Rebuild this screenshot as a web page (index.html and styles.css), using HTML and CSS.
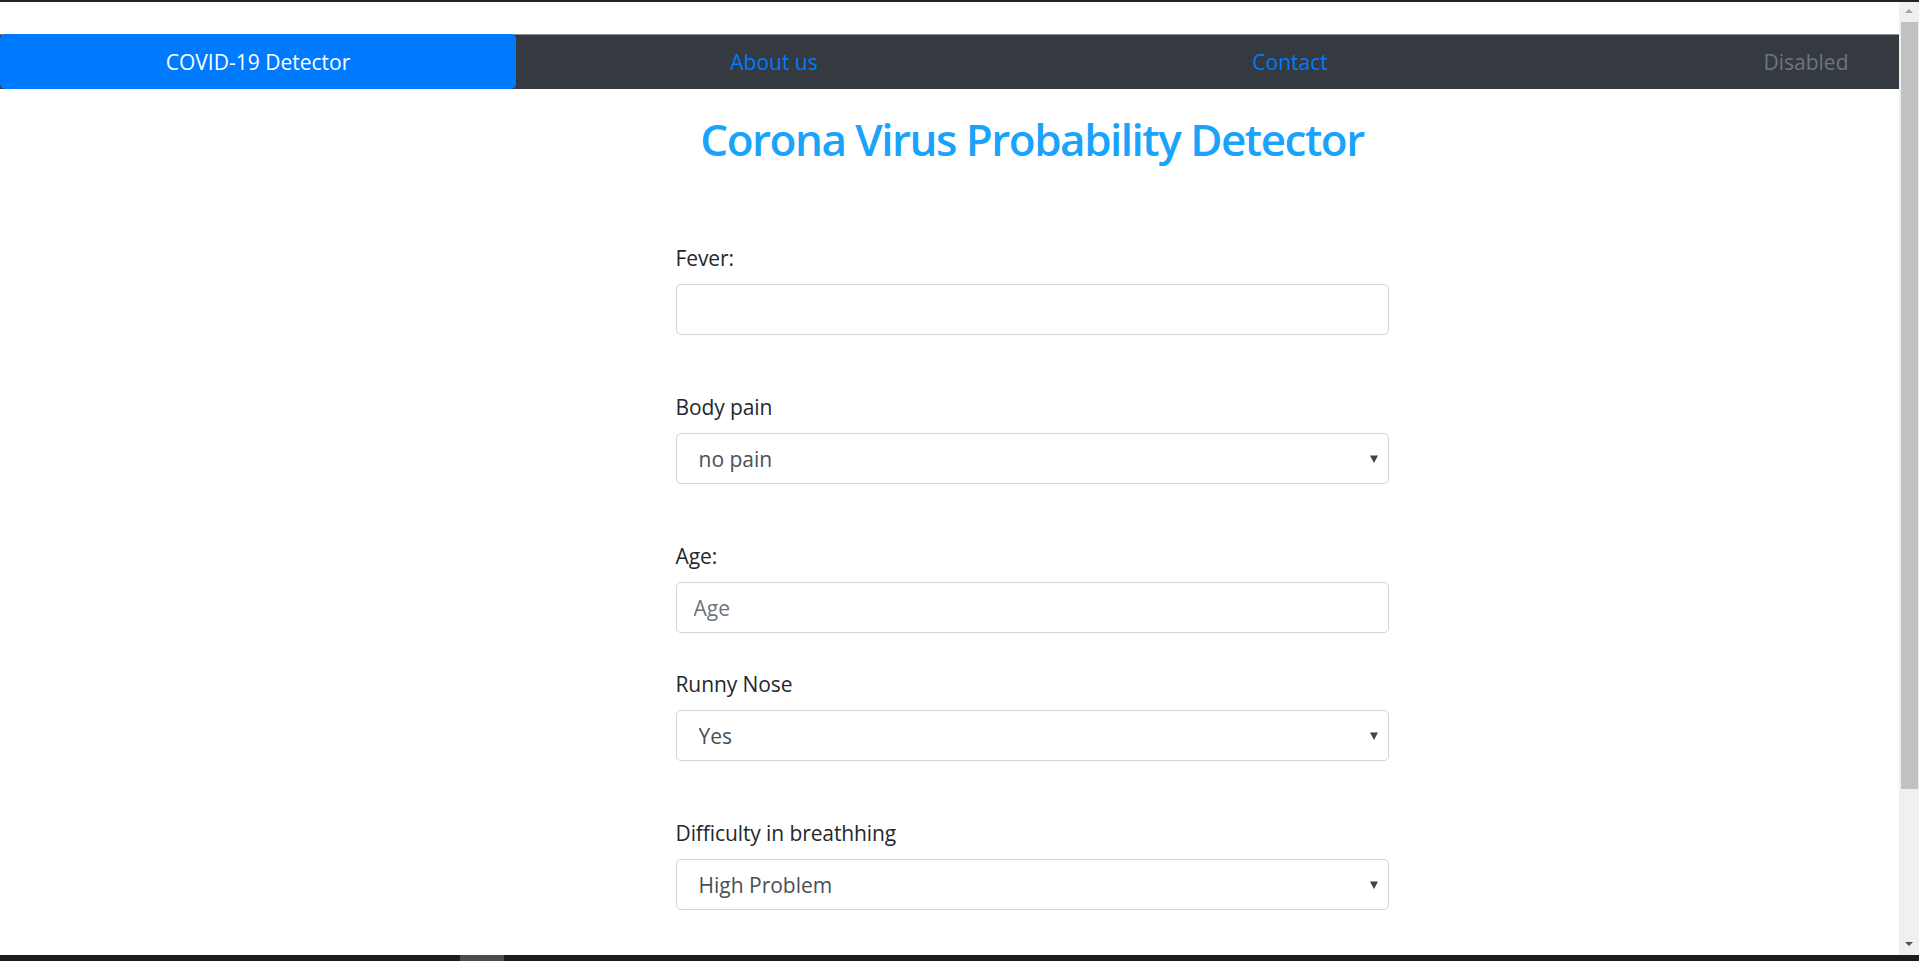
FILE: index.html
```html
<!DOCTYPE html>
<html lang="en">
<head>
<meta charset="utf-8">
<title>COVID-19 Detector</title>
<link rel="stylesheet" href="styles.css">
</head>
<body>
<div class="topline"></div>
<div class="window">
  <div class="viewport">
    <div class="page">
      <nav class="nav">
        <a class="nav-link active" href="#">COVID-19 Detector</a>
        <a class="nav-link" href="#">About us</a>
        <a class="nav-link" href="#">Contact</a>
        <a class="nav-link disabled" href="#">Disabled</a>
      </nav>
      <h1 class="title">Corona Virus Probability Detector</h1>
      <form class="form">
        <div class="group">
          <label class="label" for="fever">Fever:</label>
          <input class="control" id="fever" type="text">
        </div>
        <div class="group">
          <label class="label" for="pain">Body pain</label>
          <select class="control select" id="pain"><option>no pain</option><option>mild pain</option><option>severe pain</option></select>
        </div>
        <div class="group tight">
          <label class="label" for="age">Age:</label>
          <input class="control" id="age" type="text" placeholder="Age">
        </div>
        <div class="group">
          <label class="label" for="nose">Runny Nose</label>
          <select class="control select" id="nose"><option>Yes</option><option>No</option></select>
        </div>
        <div class="group">
          <label class="label" for="breath">Difficulty in breathhing</label>
          <select class="control select" id="breath"><option>High Problem</option><option>Low Problem</option><option>No Problem</option></select>
        </div>
      </form>
    </div>
  </div>
  <div class="vscroll">
    <span class="arrow up"></span>
    <span class="thumb"></span>
    <span class="vspace"></span>
    <span class="arrow down"></span>
  </div>
</div>
<div class="hscroll"><span class="hthumb"></span></div>
</body>
</html>
```

FILE: styles.css
```css
html, body {
  margin: 0;
  padding: 0;
}
body {
  width: 1919px;
  height: 961px;
  overflow: hidden;
  background: #ffffff;
  font-family: "Open Sans", "Noto Sans", "Liberation Sans", sans-serif;
  color: #212529;
}
.topline {
  height: 2px;
  background: #232323;
}
.window {
  display: flex;
  height: 953px;
}
.viewport {
  width: 1899px;
  flex-shrink: 0;
  overflow: hidden;
  background: #ffffff;
}
.page {
  width: 2064px;
  padding-top: 32px;
}
.nav {
  display: flex;
  height: 54px;
  background: #343a40;
  border-top: 1px solid #8b8f94;
}
.nav-link {
  flex: 0 0 516px;
  display: flex;
  align-items: center;
  justify-content: center;
  font-size: 21px;
  color: #007bff;
  text-decoration: none;
  border-radius: 5px;
}
.nav-link.active {
  background: #007bff;
  color: #ffffff;
  margin-top: -1px;
}
.nav-link.disabled {
  color: #6c757d;
}
.title {
  margin: 20px 0 0;
  height: 60px;
  line-height: 60px;
  text-align: center;
  font-size: 44px;
  font-weight: 600;
  color: #1aa3fa;
  letter-spacing: -1.5px;
}
.form {
  width: 713px;
  margin: 73px auto 0;
}
.group {
  display: flex;
  flex-direction: column;
  margin-bottom: 56px;
}
.group.tight {
  margin-bottom: 35px;
}
.label {
  line-height: 32px;
  font-size: 21px;
  margin-bottom: 10px;
  color: #24282c;
  letter-spacing: -0.1px;
}
.control {
  box-sizing: border-box;
  height: 51px;
  width: 100%;
  border: 1px solid #ced4da;
  border-radius: 5px;
  padding: 0 17px;
  font-family: inherit;
  font-size: 21px;
  color: #495057;
  background: #ffffff;
  outline: none;
}
.control::placeholder {
  color: #6c757d;
}
.select {
  appearance: none;
  -webkit-appearance: none;
  padding-left: 22px;
  background-image: url("data:image/svg+xml,%3Csvg xmlns='http://www.w3.org/2000/svg' width='8' height='8'%3E%3Cpath d='M0 0.5h8L4 8z' fill='%233f454b'/%3E%3C/svg%3E");
  background-repeat: no-repeat;
  background-position: right 10px center;
  background-size: 8px 8px;
}
.vscroll {
  flex: 1;
  display: flex;
  flex-direction: column;
  align-items: center;
  background: #f0f0f0;
}
.arrow {
  width: 0;
  height: 0;
  border-left: 4px solid transparent;
  border-right: 4px solid transparent;
}
.arrow.up {
  border-bottom: 4px solid #a3a3a3;
  margin: 7px 0 9px;
}
.arrow.down {
  border-top: 4px solid #505050;
  margin: 0 0 9px;
}
.thumb {
  width: 17px;
  height: 767px;
  background: #c1c1c1;
  margin-left: 1px;
}
.vspace {
  flex: 1;
}
.hscroll {
  height: 6px;
  background: #1c1c1c;
  display: flex;
}
.hthumb {
  width: 44px;
  margin-left: 460px;
  background: #4d4d4d;
}
```
